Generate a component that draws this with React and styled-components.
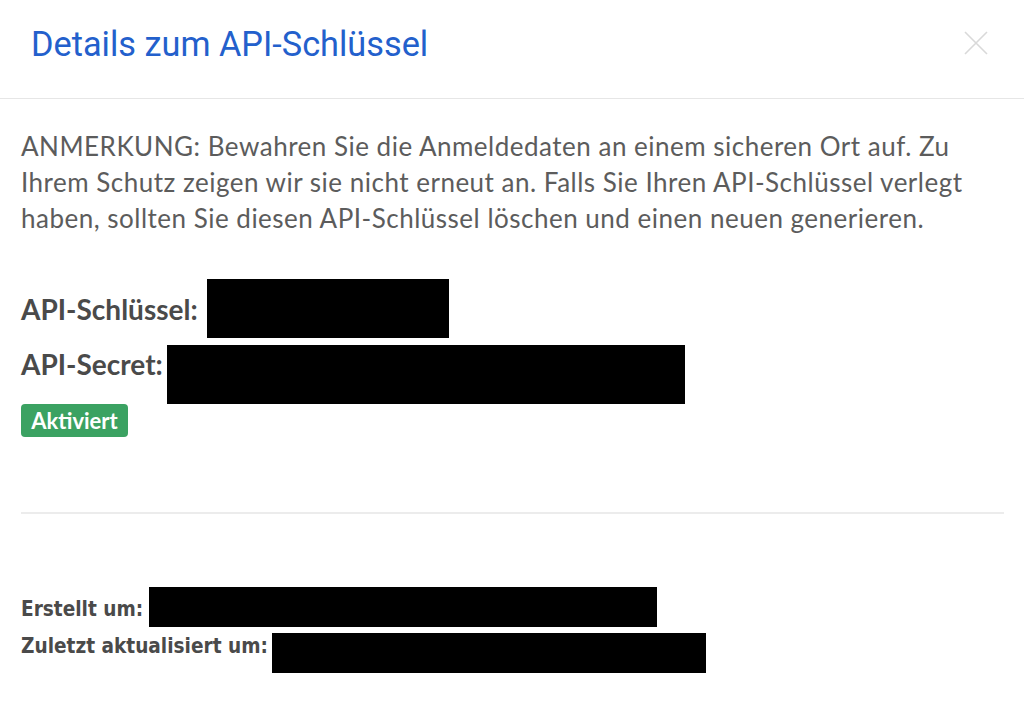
import styled, { createGlobalStyle } from "styled-components";

const GlobalStyle = createGlobalStyle`
  html, body {
    margin: 0;
    padding: 0;
    background: #ffffff;
  }
  body {
    font-family: "Lato", "Open Sans", sans-serif;
  }
`;

const Modal = styled.div`
  width: 1024px;
  height: 701px;
  background: #fff;
  display: flex;
  flex-direction: column;
`;

const Header = styled.header`
  height: 99px;
  border-bottom: 1px solid #e6e6e6;
  display: flex;
  align-items: center;
  justify-content: space-between;
  padding: 0 36px 10px 31px;
  box-sizing: border-box;
`;

const Title = styled.h1`
  margin: 0;
  font-family: "Roboto", "Liberation Sans", sans-serif;
  font-size: 34.3px;
  font-weight: 400;
  color: #2360cc;
`;

const CloseButton = styled.button`
  border: 0;
  background: none;
  padding: 0;
  width: 24px;
  height: 24px;
  cursor: pointer;
  margin-top: -3px;
`;

const Body = styled.div`
  padding: 29px 20px 0 21px;
  display: flex;
  flex-direction: column;
`;

const Note = styled.p`
  margin: 0;
  font-size: 26px;
  letter-spacing: 0.5px;
  line-height: 36px;
  color: #5c5c5c;
`;

const Fields = styled.div`
  margin-top: 43px;
  display: flex;
  flex-direction: column;
`;

const FieldRow = styled.div`
  display: flex;
  align-items: ${(p) => p.$align || "center"};
  gap: ${(p) => p.$gap}px;
  & + & {
    margin-top: 7px;
  }
`;

const Label = styled.span`
  font-size: 28px;
  font-weight: 700;
  line-height: 38px;
  color: #4a4a4a;
`;

const Redacted = styled.span`
  display: inline-block;
  flex-shrink: 0;
  background: #000;
  width: ${(p) => p.$w}px;
  height: ${(p) => p.$h}px;
`;

const Badge = styled.span`
  align-self: flex-start;
  background: #3ba262;
  color: #fff;
  font-size: 22px;
  font-weight: 700;
  border-radius: 4px;
  padding: 0 7px;
  height: 33px;
  line-height: 33px;
  box-sizing: border-box;
  width: 107px;
  text-align: center;
`;

const Divider = styled.hr`
  margin: 75px 0 0 0;
  border: 0;
  border-top: 2px solid #ececec;
`;

const Meta = styled.div`
  margin-top: 73px;
  display: flex;
  flex-direction: column;
  gap: 6px;
`;

const MetaRow = styled.div`
  display: flex;
  align-items: flex-start;
  gap: ${(p) => p.$gap}px;
`;

const MetaLabel = styled.span`
  font-family: "DejaVu Sans Condensed", "Liberation Sans Narrow", sans-serif;
  font-stretch: condensed;
  font-size: 20.6px;
  font-weight: 700;
  line-height: 24px;
  color: #4a4a4a;
  padding-top: ${(p) => p.$pad}px;
`;

function CloseIcon() {
  return (
    <svg width="24" height="24" viewBox="0 0 24 24" fill="none">
      <path d="M1 1 L23 23 M23 1 L1 23" stroke="#d9d9d9" strokeWidth="1.6" />
    </svg>
  );
}

function App() {
  return (
    <Modal>
      <GlobalStyle />
      <Header>
        <Title>Details zum API-Schlüssel</Title>
        <CloseButton aria-label="Schließen">
          <CloseIcon />
        </CloseButton>
      </Header>
      <Body>
        <Note>
          ANMERKUNG: Bewahren Sie die Anmeldedaten an einem sicheren Ort auf. Zu
          Ihrem Schutz zeigen wir sie nicht erneut an. Falls Sie Ihren
          API-Schlüssel verlegt haben, sollten Sie diesen API-Schlüssel löschen
          und einen neuen generieren.
        </Note>
        <Fields>
          <FieldRow $gap={9}>
            <Label>API-Schlüssel:</Label>
            <Redacted $w={242} $h={59} />
          </FieldRow>
          <FieldRow $gap={4} $align="flex-start">
            <Label>API-Secret:</Label>
            <Redacted $w={518} $h={59} />
          </FieldRow>
          <Badge>Aktiviert</Badge>
        </Fields>
        <Divider />
        <Meta>
          <MetaRow $gap={6}>
            <MetaLabel $pad={10}>Erstellt um:</MetaLabel>
            <Redacted $w={508} $h={40} />
          </MetaRow>
          <MetaRow $gap={4}>
            <MetaLabel $pad={1}>Zuletzt aktualisiert um:</MetaLabel>
            <Redacted $w={434} $h={40} />
          </MetaRow>
        </Meta>
      </Body>
    </Modal>
  );
}

export default App;
